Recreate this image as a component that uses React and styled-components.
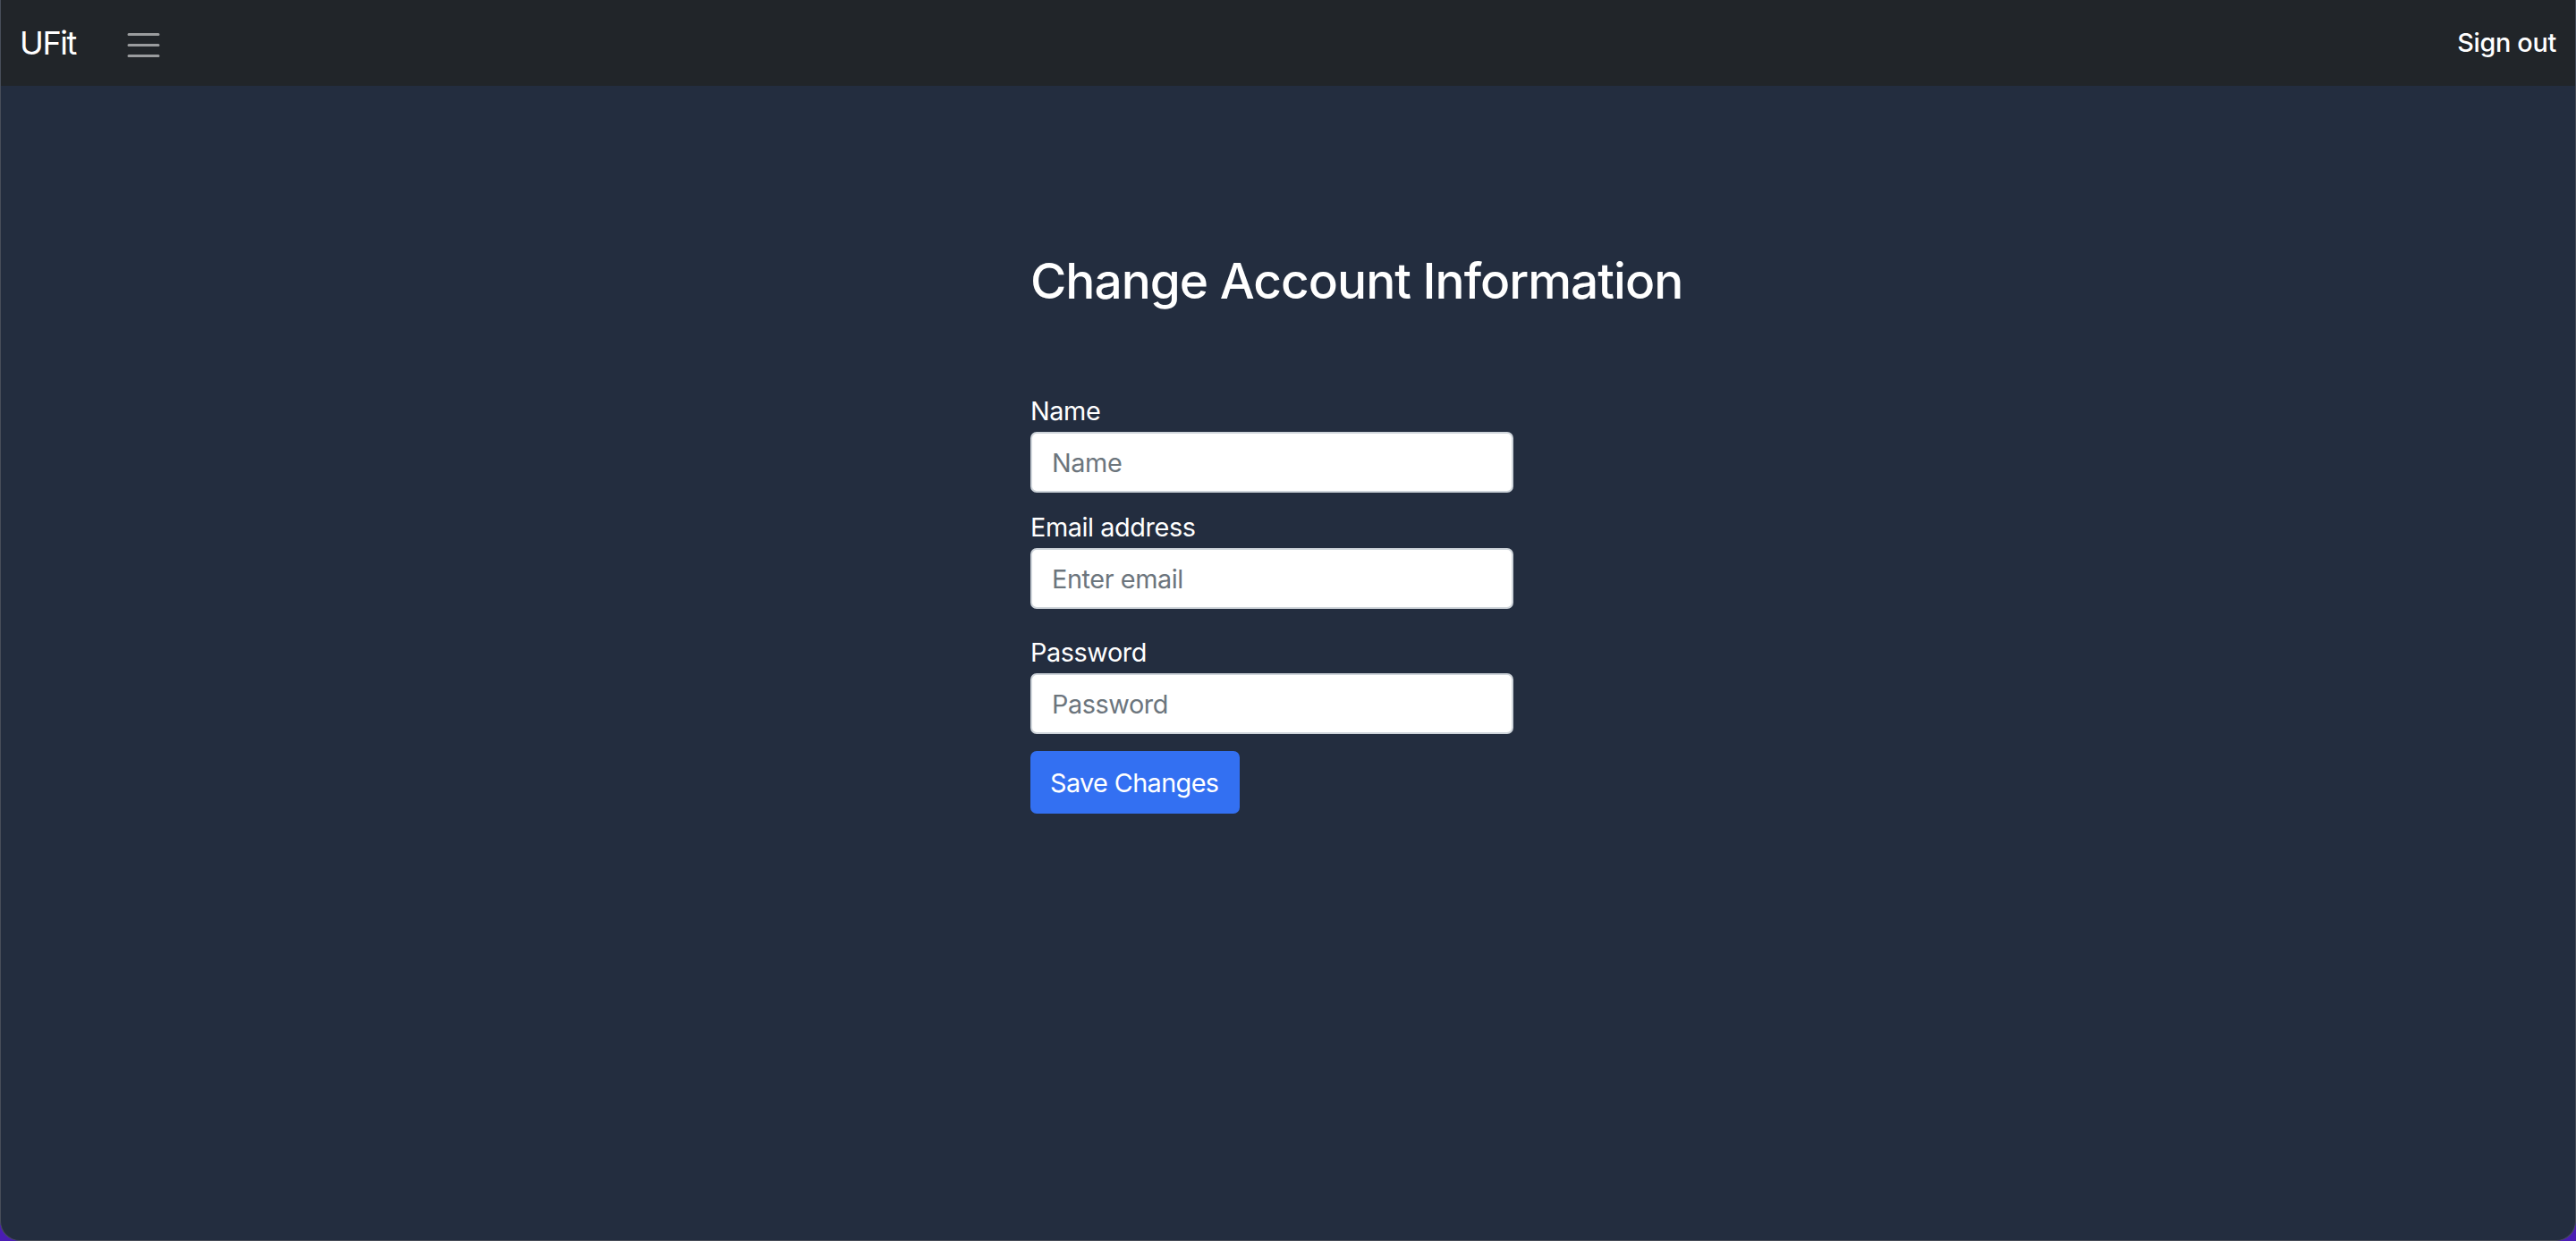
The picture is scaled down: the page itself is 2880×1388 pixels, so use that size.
import React from 'react';
import styled, { createGlobalStyle } from 'styled-components';

const GlobalStyle = createGlobalStyle`
  html, body {
    margin: 0;
    padding: 0;
    background: #4a1db4;
  }
  body {
    font-family: Inter, "Liberation Sans", sans-serif;
    color: #fff;
  }
  * {
    box-sizing: border-box;
  }
`;

const fields = [
  { label: 'Name', placeholder: 'Name', type: 'text', gap: 17 },
  { label: 'Email address', placeholder: 'Enter email', type: 'email', gap: 27 },
  { label: 'Password', placeholder: 'Password', type: 'password', gap: 19 },
];

const App = () => (
  <>
    <GlobalStyle />
    <Window>
      <Navbar>
        <Brand>UFit</Brand>
        <Toggler aria-label="Toggle navigation">
          <svg width="45" height="45" viewBox="0 0 30 30">
            <path
              d="M4 7h22M4 15h22M4 23h22"
              stroke="rgba(255,255,255,0.55)"
              strokeWidth="2"
              strokeLinecap="round"
            />
          </svg>
        </Toggler>
        <SignOut>Sign out</SignOut>
      </Navbar>
      <Main>
        <Column>
          <Heading>Change Account Information</Heading>
          <Form onSubmit={(e) => e.preventDefault()}>
            {fields.map((f) => (
              <Field key={f.label} gap={f.gap}>
                <Label>{f.label}</Label>
                <Input type={f.type} placeholder={f.placeholder} />
              </Field>
            ))}
            <SaveButton type="submit">Save Changes</SaveButton>
          </Form>
        </Column>
      </Main>
    </Window>
  </>
);

const Window = styled.div`
  display: flex;
  flex-direction: column;
  height: 1388px;
  background-color: #232d3f;
  border: 1px solid #474d59;
  border-top: 0;
  border-radius: 0 0 22px 22px;
  overflow: hidden;
`;

const Navbar = styled.nav`
  display: flex;
  align-items: center;
  height: 96px;
  padding: 0 21px 0 21px;
  background-color: #212529;
  flex-shrink: 0;
`;

const Brand = styled.a`
  font-size: 36px;
  line-height: 54px;
  color: #fff;
  margin-right: 53px;
  letter-spacing: -1.4px;
`;

const Toggler = styled.button`
  display: flex;
  padding: 0;
  margin-top: 4px;
  border: 0;
  background: transparent;
  cursor: pointer;
`;

const SignOut = styled.a`
  margin-left: auto;
  margin-top: -2px;
  font-size: 28.8px;
  line-height: 43px;
  font-weight: 500;
  color: #fff;
  cursor: pointer;
  letter-spacing: -0.3px;
`;

const Main = styled.main`
  flex: 1;
  display: flex;
  justify-content: center;
`;

const Column = styled.div`
  width: 576px;
  padding-top: 185px;
`;

const Heading = styled.h2`
  margin: 0 0 91px;
  font-size: 55px;
  line-height: 66px;
  font-weight: 500;
  white-space: nowrap;
  letter-spacing: -1px;
`;

const Form = styled.form`
  display: flex;
  flex-direction: column;
  align-items: flex-start;
  width: 540px;
`;

const Field = styled.div`
  display: flex;
  flex-direction: column;
  width: 100%;
  margin-bottom: ${(p) => p.gap}px;
`;

const Label = styled.label`
  font-size: 28.8px;
  line-height: 43px;
  margin-bottom: 2px;
  letter-spacing: -0.4px;
`;

const Input = styled.input`
  width: 100%;
  height: 68px;
  padding: 0 22px;
  font-family: inherit;
  font-size: 28.8px;
  color: #212529;
  background-color: #fff;
  border: 2px solid #ced4da;
  border-radius: 7px;
  outline: none;
  letter-spacing: -0.4px;

  &::placeholder {
    color: #6c757d;
  }
`;

const SaveButton = styled.button`
  width: 234px;
  height: 70px;
  padding: 0 0 0 22px;
  font-family: inherit;
  font-size: 28.8px;
  color: #fff;
  background-color: #3370f2;
  border: 0;
  border-radius: 7px;
  cursor: pointer;
  text-align: left;
  white-space: nowrap;
  letter-spacing: -0.6px;
`;

export default App;
